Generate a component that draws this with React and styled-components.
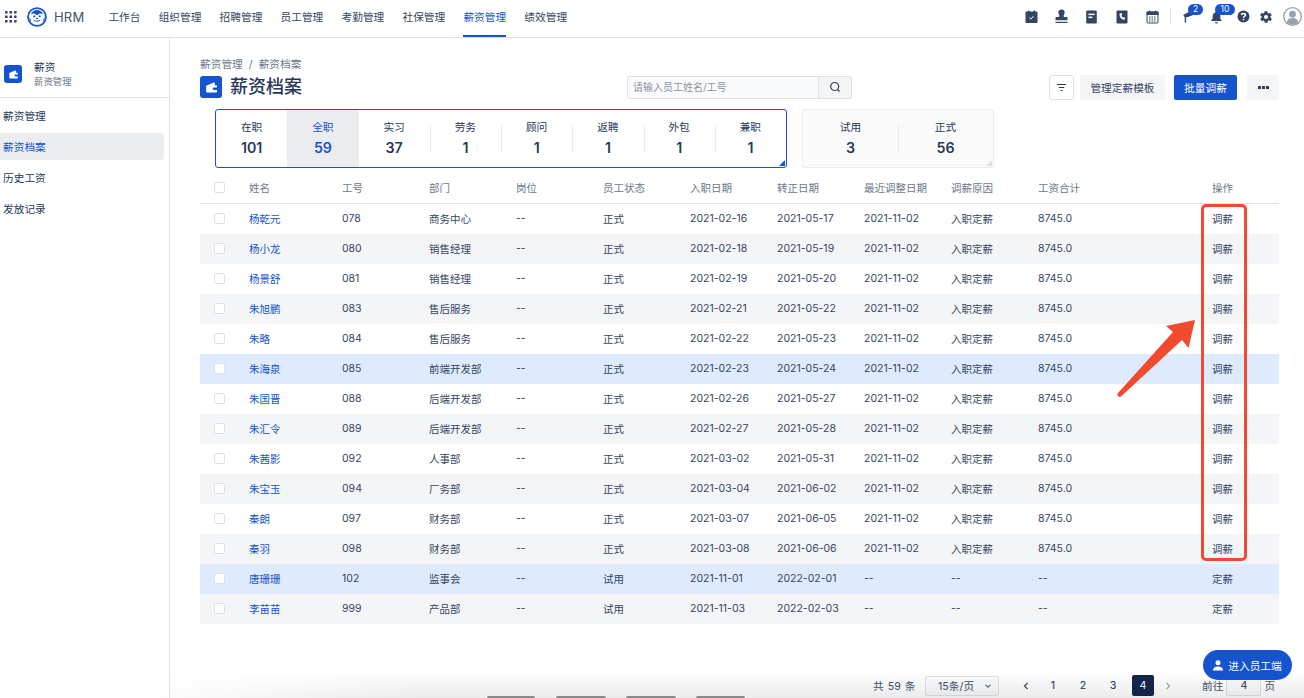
import React from "react";
import styled, { createGlobalStyle } from "styled-components";

const rows = [
  ["杨乾元", "078", "商务中心", "正式", "2021-02-16", "2021-05-17", "2021-11-02", "入职定薪", "8745.0", "调薪"],
  ["杨小龙", "080", "销售经理", "正式", "2021-02-18", "2021-05-19", "2021-11-02", "入职定薪", "8745.0", "调薪"],
  ["杨景舒", "081", "销售经理", "正式", "2021-02-19", "2021-05-20", "2021-11-02", "入职定薪", "8745.0", "调薪"],
  ["朱旭鹏", "083", "售后服务", "正式", "2021-02-21", "2021-05-22", "2021-11-02", "入职定薪", "8745.0", "调薪"],
  ["朱略", "084", "售后服务", "正式", "2021-02-22", "2021-05-23", "2021-11-02", "入职定薪", "8745.0", "调薪"],
  ["朱海泉", "085", "前端开发部", "正式", "2021-02-23", "2021-05-24", "2021-11-02", "入职定薪", "8745.0", "调薪"],
  ["朱国晋", "088", "后端开发部", "正式", "2021-02-26", "2021-05-27", "2021-11-02", "入职定薪", "8745.0", "调薪"],
  ["朱汇令", "089", "后端开发部", "正式", "2021-02-27", "2021-05-28", "2021-11-02", "入职定薪", "8745.0", "调薪"],
  ["朱茜影", "092", "人事部", "正式", "2021-03-02", "2021-05-31", "2021-11-02", "入职定薪", "8745.0", "调薪"],
  ["朱宝玉", "094", "厂务部", "正式", "2021-03-04", "2021-06-02", "2021-11-02", "入职定薪", "8745.0", "调薪"],
  ["秦朗", "097", "财务部", "正式", "2021-03-07", "2021-06-05", "2021-11-02", "入职定薪", "8745.0", "调薪"],
  ["秦羽", "098", "财务部", "正式", "2021-03-08", "2021-06-06", "2021-11-02", "入职定薪", "8745.0", "调薪"],
  ["唐珊珊", "102", "监事会", "试用", "2021-11-01", "2022-02-01", "--", "--", "--", "定薪"],
  ["李苗苗", "999", "产品部", "试用", "2021-11-03", "2022-02-03", "--", "--", "--", "定薪"],
];
const headers = ["姓名", "工号", "部门", "岗位", "员工状态", "入职日期", "转正日期", "最近调整日期", "调薪原因", "工资合计"];
const navItems = ["工作台", "组织管理", "招聘管理", "员工管理", "考勤管理", "社保管理", "薪资管理", "绩效管理"];
const sideItems = ["薪资管理", "薪资档案", "历史工资", "发放记录"];
const empTabs = [["在职", 101], ["全职", 59], ["实习", 37], ["劳务", 1], ["顾问", 1], ["返聘", 1], ["外包", 1], ["兼职", 1]];

const GlobalStyle = createGlobalStyle`
  html, body { margin: 0; padding: 0; height: 100%; }
  body {
    font-family: Inter, "Noto Sans CJK SC", sans-serif;
    color: #172b4d;
    background: #fff;
    -webkit-font-smoothing: antialiased;
  }
`;

const Page = styled.div`
  position: relative;
  width: 1304px;
  height: 698px;
  overflow: hidden;
  display: flex;
  flex-direction: column;
`;

const TopBar = styled.header`
  height: 37px;
  flex: none;
  display: flex;
  align-items: stretch;
  border-bottom: 1px solid #e2e3e6;
  padding: 0 2px 0 5px;
`;

const Brand = styled.div`
  display: flex;
  align-items: center;
  padding-bottom: 4px;
  margin-right: 24px;
  gap: 10px;
`;

const BrandName = styled.span`
  font-size: 13px;
  color: #42526e;
  margin-left: -3px;
  letter-spacing: 0.2px;
`;

const Nav = styled.nav`
  display: flex;
  gap: 18.2px;
`;

const NavItem = styled.a`
  display: flex;
  align-items: center;
  font-size: 10.7px;
  height: 37px;
  box-sizing: border-box;
  padding-bottom: 3px;
  color: ${(p) => (p.$active ? "#1553cf" : "#344563")};
  border-bottom: 2px solid ${(p) => (p.$active ? "#1553cf" : "transparent")};
`;

const Tools = styled.div`
  margin-left: auto;
  display: flex;
  align-items: center;
  padding-bottom: 4px;
`;

const ToolIcon = styled.span`
  position: relative;
  display: flex;
  width: ${(p) => p.$w || 14}px;
  margin-left: ${(p) => p.$gap ?? 0}px;
  justify-content: center;
`;

const Divider = styled.span`
  width: 1px;
  height: 15px;
  background: #dfe1e6;
  margin: 0 10px 0 11px;
`;

const Badge = styled.span`
  position: absolute;
  top: -6px;
  left: ${(p) => p.$left}px;
  min-width: ${(p) => p.$w}px;
  height: 11px;
  line-height: 11px;
  border-radius: 6px;
  background: #1553cf;
  color: #fff;
  font-size: 8.5px;
  text-align: center;
`;

const Body = styled.div`
  flex: 1;
  display: flex;
  min-height: 0;
`;

const Sidebar = styled.aside`
  width: 169px;
  flex: none;
  border-right: 1px solid #e2e3e6;
`;

const SideHead = styled.div`
  height: 60px;
  box-sizing: border-box;
  border-bottom: 1px solid #e2e3e6;
  display: flex;
  align-items: center;
  padding: 13px 0 0 4px;
  gap: 12px;
`;

const SideTitle = styled.div`
  font-size: 10.7px;
  line-height: 14px;
  color: #253858;
`;

const SideSub = styled.div`
  font-size: 9.4px;
  line-height: 13px;
  color: #6b778c;
`;

const SideMenu = styled.div`
  padding: 4px 5px 0 0;
  display: flex;
  flex-direction: column;
  gap: 4px;
`;

const SideItem = styled.a`
  height: 27px;
  display: flex;
  align-items: center;
  padding-left: 3px;
  font-size: 10.7px;
  border-radius: 0 3px 3px 0;
  color: ${(p) => (p.$active ? "#1553cf" : "#253858")};
  background: ${(p) => (p.$active ? "#ebecf0" : "transparent")};
`;

const Main = styled.main`
  flex: 1;
  min-width: 0;
  padding: 20px 25px 0 30px;
  display: flex;
  flex-direction: column;
`;

const Crumbs = styled.div`
  font-size: 10.7px;
  line-height: 14px;
  color: #6b778c;
  display: flex;
  gap: 6px;
`;

const HeadRow = styled.div`
  display: flex;
  align-items: center;
  height: 28px;
  margin-top: 1px;
`;

const TileIcon = styled.span`
  display: flex;
  align-items: center;
  justify-content: center;
  width: ${(p) => p.$size}px;
  height: ${(p) => p.$size}px;
  border-radius: 3px;
  background: #1553cf;
  flex: none;
`;

const PageTitle = styled.h1`
  font-size: 18px;
  font-weight: 500;
  line-height: 24px;
  margin: 0 0 0 8px;
  width: 397px;
  color: #253858;
`;

const SearchBox = styled.div`
  display: flex;
  width: 225px;
  height: 23px;
  box-sizing: border-box;
  border: 1px solid #dfe1e6;
  border-radius: 2px;
`;

const SearchInput = styled.div`
  flex: 1;
  font-size: 10px;
  line-height: 21px;
  padding-left: 5px;
  color: #8993a4;
  background: #fafbfc;
`;

const SearchBtn = styled.span`
  width: 32px;
  display: flex;
  align-items: center;
  justify-content: center;
  background: #f4f5f7;
  border-left: 1px solid #dfe1e6;
`;

const Actions = styled.div`
  margin-left: auto;
  display: flex;
  align-items: center;
`;

const FilterBtn = styled.span`
  width: 25px;
  height: 25px;
  box-sizing: border-box;
  border: 1px solid #dfe1e6;
  border-radius: 3px;
  display: flex;
  align-items: center;
  justify-content: center;
  margin-right: 6px;
`;

const Btn = styled.span`
  height: 25px;
  display: flex;
  align-items: center;
  justify-content: center;
  width: ${(p) => p.$w}px;
  margin-left: ${(p) => p.$gap || 0}px;
  border-radius: 2px;
  font-size: 10.7px;
  color: ${(p) => (p.$primary ? "#fff" : "#344563")};
  background: ${(p) => (p.$primary ? "#1553cf" : "#f4f5f7")};
`;

const Cards = styled.div`
  display: flex;
  gap: 15px;
  margin: 8px 0 0 15px;
`;

const TabCard = styled.div`
  position: relative;
  display: flex;
  height: 59px;
  box-sizing: border-box;
  width: ${(p) => p.$w}px;
  border-radius: 3px;
  border: 1px solid ${(p) => (p.$active ? "#1553cf" : "#ebecf0")};
  background: ${(p) => (p.$active ? "#fff" : "#fafafa")};
  &::after {
    content: "";
    position: absolute;
    right: 1px;
    bottom: 1px;
    border-style: solid;
    border-width: 0 0 6px 6px;
    border-color: transparent transparent ${(p) => (p.$active ? "#1553cf" : "#dfe1e6")} transparent;
  }
`;

const Tab = styled.div`
  position: relative;
  flex: 1;
  display: flex;
  flex-direction: column;
  align-items: center;
  padding-top: 11px;
  color: ${(p) => (p.$active ? "#1553cf" : "#253858")};
  background: ${(p) => (p.$active ? "#ebecf0" : "transparent")};
  &::before {
    content: "";
    display: ${(p) => (p.$line ? "block" : "none")};
    position: absolute;
    left: 0;
    top: 15px;
    height: 27px;
    width: 1px;
    background: #ebecf0;
  }
`;

const TabLabel = styled.span`
  font-size: 10.7px;
  line-height: 14px;
`;

const TabValue = styled.span`
  font-size: 14.2px;
  font-weight: 600;
  line-height: 18px;
  margin-top: 4px;
`;

const Table = styled.div`
  margin-top: 6px;
  width: 1079px;
`;

const Row = styled.div`
  display: grid;
  grid-template-columns: 40px 93px repeat(9, 87px) 87px 76px;
  height: 30px;
  box-sizing: border-box;
  padding-bottom: 2px;
  align-items: center;
  font-size: 10.5px;
  color: #344563;
  background: ${(p) => (p.$hl ? "#deebff" : p.$stripe ? "#f4f5f7" : "#fff")};
`;

const HeadCells = styled(Row)`
  color: #6b778c;
  border-bottom: 1px solid #e2e3e6;
`;

const Cell = styled.span`
  padding-left: 9px;
  white-space: nowrap;
`;

const NameLink = styled(Cell)`
  color: #1553cf;
`;

const CheckCell = styled.span`
  padding-left: 14px;
  display: flex;
`;

const Check = styled.span`
  width: 9px;
  height: 9px;
  border: 1px solid #dfe1e6;
  border-radius: 2px;
  background: #fff;
`;

const Pager = styled.div`
  margin-top: auto;
  height: 32px;
  display: flex;
  align-items: center;
  font-size: 10.7px;
  color: #42526e;
  padding: 7px 0 0 673px;
  box-sizing: border-box;
  margin-right: -12px;
`;

const Total = styled.span`
  word-spacing: 1px;
  width: 52px;
  white-space: nowrap;
`;

const PageSize = styled.span`
  width: 74px;
  height: 20px;
  box-sizing: border-box;
  border: 1px solid #dfe1e6;
  border-radius: 2px;
  display: flex;
  align-items: center;
  justify-content: space-between;
  padding: 0 6px 0 12px;
  margin-right: 16px;
  color: #42526e;
  background: #fafbfc;
`;

const PageBtn = styled.span`
  width: 22px;
  height: 21px;
  margin-right: ${(p) => p.$gap ?? 8}px;
  border-radius: 2px;
  display: flex;
  align-items: center;
  justify-content: center;
  font-size: 10.7px;
  color: ${(p) => (p.$active ? "#fff" : "#253858")};
  background: ${(p) => (p.$active ? "#14274b" : "transparent")};
`;

const GoTo = styled.span`
  margin-left: 15px;
  display: flex;
  align-items: center;
  gap: 3px;
`;

const GoInput = styled.span`
  width: 35px;
  height: 20px;
  box-sizing: border-box;
  border: 1px solid #dfe1e6;
  border-radius: 2px;
  display: flex;
  align-items: center;
  justify-content: center;
  color: #253858;
  background: #fafbfc;
`;

const Floating = styled.a`
  position: absolute;
  left: 1203px;
  top: 650px;
  width: 89px;
  height: 30px;
  border-radius: 15px;
  background: #1553cf;
  color: #fff;
  font-size: 10.7px;
  display: flex;
  align-items: center;
  justify-content: center;
  gap: 5px;
  z-index: 3;
`;

const RedBox = styled.div`
  position: absolute;
  left: 1201px;
  top: 204px;
  width: 46px;
  height: 357px;
  box-sizing: border-box;
  border: 3px solid #f24a2f;
  border-radius: 5px;
`;

const Arrow = styled.svg`
  position: absolute;
  left: 1110px;
  top: 310px;
`;

const DockShade = styled.div`
  position: absolute;
  left: 0;
  right: 0;
  bottom: 0;
  height: 26px;
  background: linear-gradient(rgba(0, 0, 0, 0), rgba(0, 0, 0, 0.08));
  mask-image: linear-gradient(to right, transparent 130px, #000 420px);
  pointer-events: none;
`;

const DockTab = styled.span`
  position: absolute;
  bottom: 0;
  left: ${(p) => p.$x}px;
  width: ${(p) => p.$w}px;
  height: 2px;
  border-radius: 2px 2px 0 0;
  background: #888;
`;

const Wallet = ({ size }) => (
  <svg width={size} height={size} viewBox="0 0 16 16">
    <path
      fill="#fff"
      d="M3.500 6.500 9.800 3.800c.5-.2 1 .1 1 .7V6h1c.5 0 .8.300.8.800V8h-2.300c-.8 0-1.300.4-1.300 1s.5 1 1.300 1h2.300v1.500c0 .5-.3.8-.8.800H4.300c-.5 0-.8-.3-.8-.8Z"
    />
  </svg>
);

const Grid9 = () => (
  <svg width="12" height="12" viewBox="0 0 12 12" fill="#344563">
    {[0, 4.5, 9].map((y) =>
      [0, 4.5, 9].map((x) => <rect key={`${x}-${y}`} x={x} y={y} width="2.6" height="2.6" rx=".4" />)
    )}
  </svg>
);

const Logo = () => (
  <svg width="20" height="20" viewBox="0 0 20 20">
    <circle cx="10" cy="10" r="9.800" fill="#1553cf" />
    <circle cx="10" cy="10" r="8" fill="#fff" />
    <path fill="#1553cf" d="M3.800 7.500C4.800 4.600 7.200 3 10 3s5.200 1.600 6.200 4.500c-1.400-1.100-3-1.300-4.200-.6-.8.4-1.300 1-2 1s-1.200-.6-2-1c-1.200-.7-2.800-.5-4.200.6Z" />
    <circle cx="7.300" cy="9.300" r="1.100" fill="#1553cf" />
    <circle cx="12.700" cy="9.300" r="1.100" fill="#1553cf" />
    <path fill="#1553cf" d="M9 11h2l.4 1.100H8.600Z" />
    <path fill="none" stroke="#1553cf" strokeWidth="1" d="M6.800 13.200c1.800 1.300 4.600 1.300 6.400 0" />
    <path fill="#1553cf" d="M2.600 10.500c.8.800 1.400 2.300 1.500 4l-1-1c-.4-.9-.6-2-.5-3ZM17.400 10.500c-.8.800-1.400 2.300-1.500 4l1-1c.4-.9.600-2 .5-3Z" />
  </svg>
);

const c = "#344563";

const CalCheck = () => (
  <svg width="13" height="14" viewBox="0 0 13 14">
    <path fill={c} d="M1.500 1.500H3V.5h1.500v1h4v-1H10v1h1.500c.6 0 1 .4 1 1V12c0 .6-.4 1-1 1h-10c-.6 0-1-.4-1-1V2.500c0-.6.4-1 1-1Z" />
    <path fill="none" stroke="#fff" strokeWidth="1" d="M4.300 7.600 5.800 9l2.900-2.800" />
  </svg>
);

const Stamp = () => (
  <svg width="13" height="15" viewBox="0 0 13 15" fill={c}>
    <path d="M6.500.5c1.900 0 3.200 1.300 3.200 3 0 1.300-.8 2-1 3-.1.600 0 1.100.4 1.500h2.400c.6 0 1 .4 1 1v2.200H.5V9c0-.6.4-1 1-1h2.400c.4-.4.5-.9.400-1.500-.2-1-1-1.700-1-3 0-1.700 1.300-3 3.200-3Z" />
    <rect x=".5" y="12.800" width="12" height="1.200" />
  </svg>
);

const Card = () => (
  <svg width="11" height="14" viewBox="0 0 11 14">
    <rect x=".2" y=".5" width="10.600" height="13" rx="1.300" fill={c} />
    <rect x="2.400" y="3.600" width="6.200" height="1.500" fill="#fff" />
    <rect x="2.400" y="6.600" width="4" height="1.500" fill="#fff" />
  </svg>
);

const PhoneBook = () => (
  <svg width="12" height="14" viewBox="0 0 12 14">
    <rect x=".5" y=".5" width="11" height="13" rx="1" fill={c} />
    <path fill="#fff" d="M4.300 3.200 5.600 3l.6 1.800-.8.7c.3.900.8 1.600 1.500 2.100l.9-.6 1.400 1.300-.6 1.100c-.3.400-.7.500-1.100.4C5 9.100 3.400 6.800 3.500 4.200c0-.5.300-.9.800-1Z" />
  </svg>
);

const Calendar = () => (
  <svg width="13" height="14" viewBox="0 0 13 14" fill="none" stroke={c}>
    <rect x="1" y="2" width="11" height="11" rx="1" />
    <rect x="1" y="2" width="11" height="2.500" fill={c} />
    <path d="M3.500.5v2M9.500.5v2" />
    <path strokeDasharray="1.500 1" d="M3 7h7.500M3 9h7.500M3 11h7.500" />
  </svg>
);

const Flag = () => (
  <svg width="12" height="13" viewBox="0 0 12 13" fill={c}>
    <path d="M1.200 5 8.600 1l2.200 4.200-5.800 2-.5 0-1.300.8Z" />
    <rect x="2.700" y="7.500" width="1.400" height="5" />
  </svg>
);

const Bell = () => (
  <svg width="13" height="14" viewBox="0 0 13 14" fill={c}>
    <path d="M6.500 1c.5 0 .8.300.8.800v.5c1.900.4 3 1.900 3 3.700v3l1.400 1.500v.5H1.300V10l1.400-1.500V6c0-1.800 1.100-3.300 3-3.700v-.5c0-.5.300-.8.800-.8Z" />
    <path d="M5 12.200h3c0 .8-.7 1.300-1.500 1.300S5 13 5 12.200Z" />
  </svg>
);

const Help = () => (
  <svg width="13" height="13" viewBox="0 0 13 13">
    <circle cx="6.500" cy="6.500" r="6" fill={c} />
    <path fill="none" stroke="#fff" strokeWidth="1.500" d="M4.500 5.100c0-1.100.9-1.700 2-1.700s2 .6 2 1.600c0 1.400-2 1.400-2 2.700" />
    <rect x="5.800" y="8.800" width="1.500" height="1.400" fill="#fff" />
  </svg>
);

const Gear = () => (
  <svg width="14" height="14" viewBox="0 0 24 24">
    <path fill={c} fillRule="evenodd" d="M19.400 13c.1-.3.100-.7.100-1s0-.7-.1-1l2.100-1.600c.2-.2.300-.4.100-.7l-2-3.400c-.1-.2-.4-.3-.6-.2l-2.500 1c-.5-.4-1.100-.7-1.700-1l-.4-2.700c0-.2-.2-.4-.5-.4h-4c-.2 0-.5.200-.5.400l-.4 2.700c-.6.300-1.200.6-1.700 1l-2.500-1c-.2-.1-.5 0-.6.200l-2 3.400c-.1.300 0 .5.100.7L4.600 11c-.1.300-.1.700-.1 1s0 .7.100 1l-2.100 1.600c-.2.200-.3.400-.1.700l2 3.400c.1.200.4.300.6.200l2.500-1c.5.400 1.100.7 1.700 1l.4 2.700c0 .2.300.4.500.4h4c.3 0 .5-.2.500-.4l.4-2.700c.6-.3 1.200-.6 1.700-1l2.500 1c.2.1.5 0 .6-.2l2-3.400c.2-.3.100-.5-.1-.7ZM12 15.500a3.500 3.500 0 1 1 0-7 3.500 3.500 0 0 1 0 7Z" />
  </svg>
);

const Avatar = () => (
  <svg width="19" height="19" viewBox="0 0 18 18">
    <circle cx="9" cy="9" r="9" fill="#9aa1b0" />
    <circle cx="9" cy="9" r="7.700" fill="#fff" />
    <circle cx="9" cy="6.800" r="3.200" fill="#9aa1b0" />
    <path fill="#9aa1b0" d="M3.600 14.500c.3-2.700 2.500-4 5.400-4s5.100 1.300 5.400 4C13 16 11 16.700 9 16.700S5 16 3.600 14.500Z" />
  </svg>
);

const Chevron = ({ dir, color }) => (
  <svg width="8" height="8" viewBox="0 0 8 8" fill="none" stroke={color} strokeWidth="1.300">
    <path d={dir === "left" ? "M5.500 1 2.500 4l3 3" : dir === "right" ? "M2.500 1l3 3-3 3" : "M1.500 2.800 4 5.200l2.500-2.400"} />
  </svg>
);

export default function App() {
  return (
    <>
      <GlobalStyle />
      <Page>
        <TopBar>
          <Brand>
            <Grid9 />
            <Logo />
            <BrandName>HRM</BrandName>
          </Brand>
          <Nav>
            {navItems.map((n) => (
              <NavItem key={n} $active={n === "薪资管理"}>{n}</NavItem>
            ))}
          </Nav>
          <Tools>
            <ToolIcon><CalCheck /></ToolIcon>
            <ToolIcon $gap={15.5}><Stamp /></ToolIcon>
            <ToolIcon $gap={16.5}><Card /></ToolIcon>
            <ToolIcon $gap={16}><PhoneBook /></ToolIcon>
            <ToolIcon $gap={16.5}><Calendar /></ToolIcon>
            <Divider />
            <ToolIcon><Flag /><Badge $left={7} $w={15}>2</Badge></ToolIcon>
            <ToolIcon $gap={14}><Bell /><Badge $left={6} $w={20}>10</Badge></ToolIcon>
            <ToolIcon $gap={13}><Help /></ToolIcon>
            <ToolIcon $gap={9}><Gear /></ToolIcon>
            <ToolIcon $w={19} $gap={10}><Avatar /></ToolIcon>
          </Tools>
        </TopBar>
        <Body>
          <Sidebar>
            <SideHead>
              <TileIcon $size={18}><Wallet size={15} /></TileIcon>
              <div>
                <SideTitle>薪资</SideTitle>
                <SideSub>薪资管理</SideSub>
              </div>
            </SideHead>
            <SideMenu>
              {sideItems.map((s) => (
                <SideItem key={s} $active={s === "薪资档案"}>{s}</SideItem>
              ))}
            </SideMenu>
          </Sidebar>
          <Main>
            <Crumbs>
              <span>薪资管理</span>
              <span>/</span>
              <span>薪资档案</span>
            </Crumbs>
            <HeadRow>
              <TileIcon $size={22}><Wallet size={19} /></TileIcon>
              <PageTitle>薪资档案</PageTitle>
              <SearchBox>
                <SearchInput>请输入员工姓名/工号</SearchInput>
                <SearchBtn>
                  <svg width="12" height="12" viewBox="0 0 12 12" fill="none" stroke="#344563" strokeWidth="1.200">
                    <circle cx="5.700" cy="5.500" r="4" />
                    <path d="M8.500 8.500 10.500 10.500" />
                  </svg>
                </SearchBtn>
              </SearchBox>
              <Actions>
                <FilterBtn>
                  <svg width="11" height="9" viewBox="0 0 11 9" stroke="#253858" strokeWidth="1.100">
                    <path d="M1 1.500h9M2.800 4.500h5.400M4.500 7.500h2" />
                  </svg>
                </FilterBtn>
                <Btn $w={85}>管理定薪模板</Btn>
                <Btn $w={63} $primary $gap={9}>批量调薪</Btn>
                <Btn $w={32} $gap={10}>
                  <svg width="11" height="3" viewBox="0 0 11 3" fill="#253858">
                    <rect width="3" height="3" rx=".5" />
                    <rect x="4" width="3" height="3" rx=".5" />
                    <rect x="8" width="3" height="3" rx=".5" />
                  </svg>
                </Btn>
              </Actions>
            </HeadRow>
            <Cards>
              <TabCard $active $w={572}>
                {empTabs.map(([label, value], i) => (
                  <Tab key={label} $active={i === 1} $line={i > 2}>
                    <TabLabel>{label}</TabLabel>
                    <TabValue>{value}</TabValue>
                  </Tab>
                ))}
              </TabCard>
              <TabCard $w={192}>
                <Tab>
                  <TabLabel>试用</TabLabel>
                  <TabValue>3</TabValue>
                </Tab>
                <Tab $line>
                  <TabLabel>正式</TabLabel>
                  <TabValue>56</TabValue>
                </Tab>
              </TabCard>
            </Cards>
            <Table>
              <HeadCells>
                <CheckCell><Check /></CheckCell>
                {headers.map((h) => (
                  <Cell key={h}>{h}</Cell>
                ))}
                <span />
                <Cell>操作</Cell>
              </HeadCells>
              {rows.map((r, i) => (
                <Row key={r[1]} $stripe={i % 2 === 1} $hl={i === 5 || i === 12}>
                  <CheckCell><Check /></CheckCell>
                  <NameLink>{r[0]}</NameLink>
                  <Cell>{r[1]}</Cell>
                  <Cell>{r[2]}</Cell>
                  <Cell>--</Cell>
                  <Cell>{r[3]}</Cell>
                  <Cell>{r[4]}</Cell>
                  <Cell>{r[5]}</Cell>
                  <Cell>{r[6]}</Cell>
                  <Cell>{r[7]}</Cell>
                  <Cell>{r[8]}</Cell>
                  <span />
                  <Cell>{r[9]}</Cell>
                </Row>
              ))}
            </Table>
            <Pager>
              <Total>共 59 条</Total>
              <PageSize>15条/页<Chevron dir="down" color="#6b778c" /></PageSize>
              <PageBtn $gap={5}><Chevron dir="left" color="#42526e" /></PageBtn>
              {[1, 2, 3, 4].map((n) => (
                <PageBtn key={n} $active={n === 4} $gap={n === 4 ? 3 : 8}>{n}</PageBtn>
              ))}
              <PageBtn><Chevron dir="right" color="#a5adba" /></PageBtn>
              <GoTo>前往<GoInput>4</GoInput>页</GoTo>
            </Pager>
          </Main>
        </Body>
        <Floating>
          <svg width="10" height="11" viewBox="0 0 10 11" fill="#fff">
            <circle cx="5" cy="2.800" r="2.500" />
            <path d="M0 10.500c0-2.700 2-4 5-4s5 1.300 5 4Z" />
          </svg>
          进入员工端
        </Floating>
        <RedBox />
        <Arrow width="90" height="92" viewBox="0 0 90 92">
          <path
            fill="#f24a2f"
            d="M85 10 56 16 63 22 8 83c-1.500 1.800.5 5 3 3.500L72 30l6.500 8Z"
          />
        </Arrow>
        <DockShade>
          <DockTab $x={487} $w={48} />
          <DockTab $x={556} $w={50} />
          <DockTab $x={626} $w={50} />
          <DockTab $x={696} $w={49} />
        </DockShade>
      </Page>
    </>
  );
}
